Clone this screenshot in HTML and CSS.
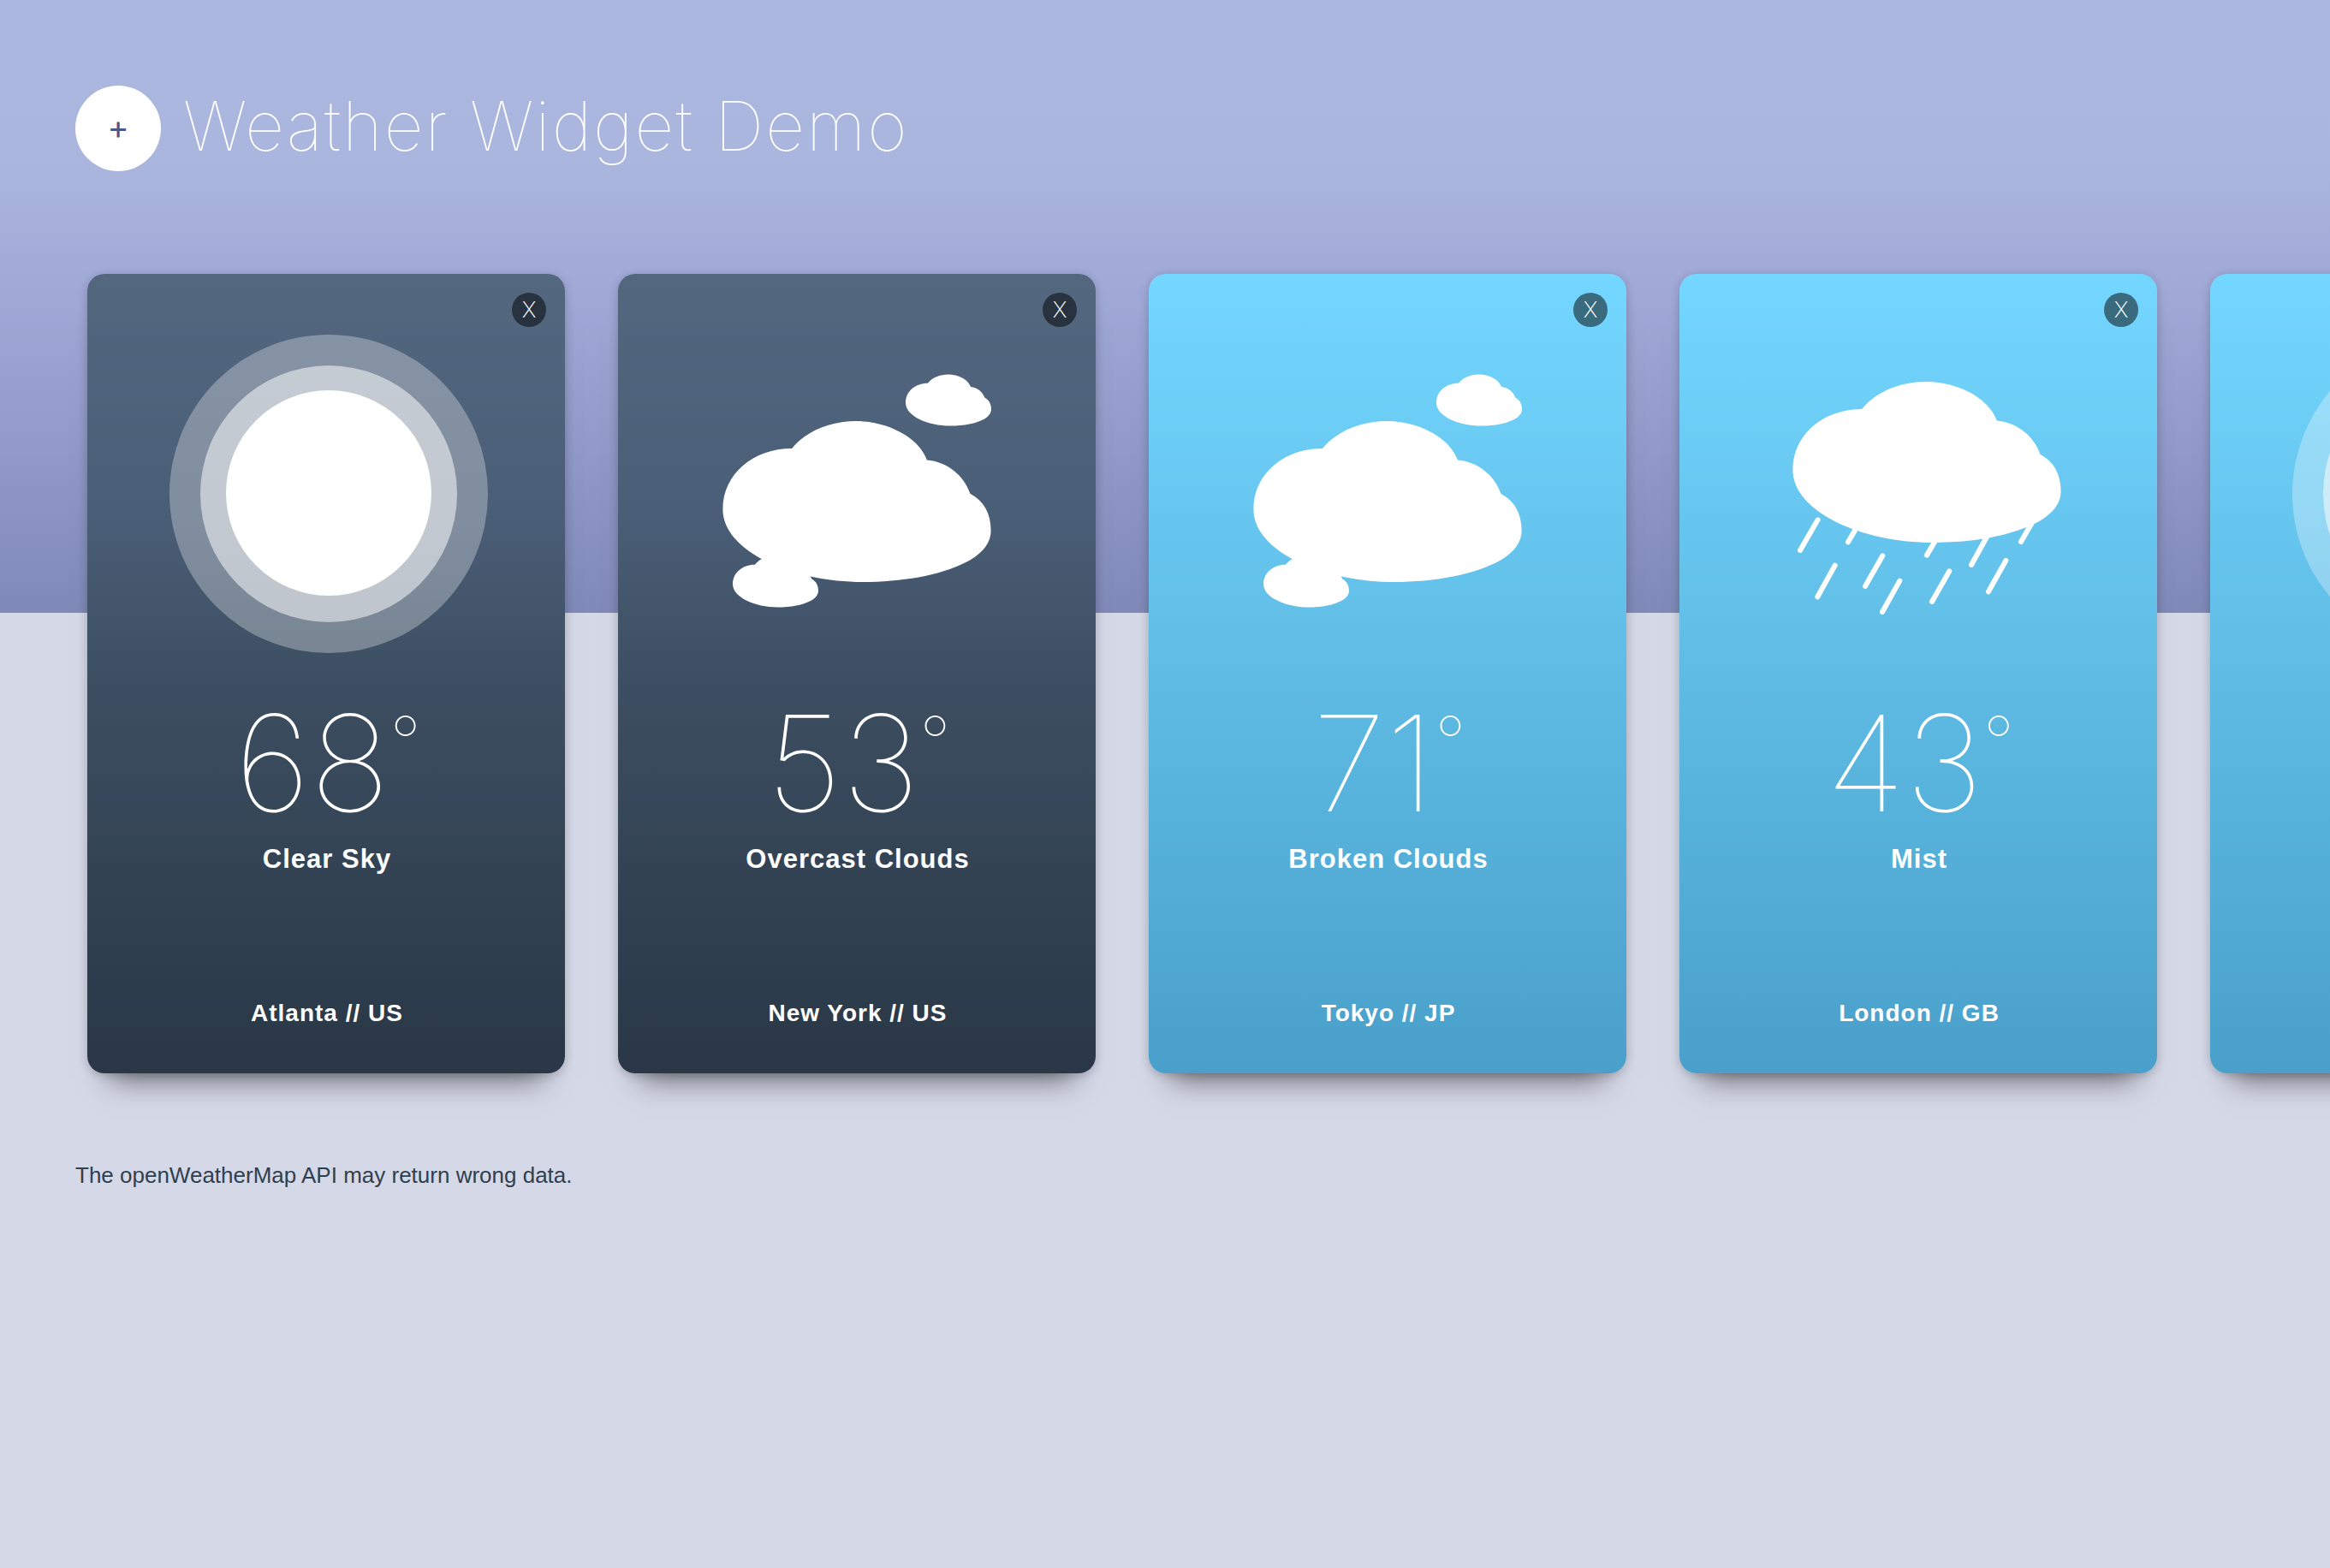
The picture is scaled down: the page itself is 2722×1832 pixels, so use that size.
FILE: index.html
```html
<!DOCTYPE html>
<html lang="en">
<head>
<meta charset="utf-8">
<meta name="viewport" content="width=device-width, initial-scale=1">
<title>Weather Widget Demo</title>
<link rel="stylesheet" href="styles.css">
</head>
<body>
<svg class="symbols" aria-hidden="true">
  <symbol id="puff" viewBox="132 275 943 566">
    <path d="M375 371C425 310 510 275 600 275C710 275 820 330 850 412C920 418 980 465 1002 530C1050 555 1075 600 1075 660C1075 700 1050 735 1000 765C910 815 770 841 625 841C380 841 132 735 132 585C132 460 240 371 375 371Z"/>
  </symbol>
  <symbol id="sun" viewBox="0 0 558 480">
    <circle cx="282" cy="257" r="186" opacity=".3"/>
    <circle cx="282" cy="257" r="150" opacity=".52"/>
    <circle cx="282" cy="256" r="120"/>
  </symbol>
  <symbol id="clouds" viewBox="0 0 558 480">
    <use href="#puff" x="122" y="172" width="314" height="188"/>
    <use href="#puff" x="336" y="117" width="100" height="61"/>
    <use href="#puff" x="134" y="329" width="100" height="61"/>
  </symbol>
  <symbol id="rain" viewBox="0 0 558 480">
    <use href="#puff" x="132" y="126" width="314" height="188"/>
    <g transform="translate(98 90) scale(.3333)" stroke="#fff" stroke-width="18" stroke-linecap="round">
      <path d="M191 592L129 699M330 614L297 670M251 752L190 862M418 718L357 825M478 806L417 915M612 650L573 716M652 772L591 879M790 640L729 750M940 605L903 669M850 735L789 844"/>
    </g>
  </symbol>
</svg>
<header class="header">
  <button class="add" type="button" aria-label="Add city">+</button>
  <h1 class="title">Weather Widget Demo</h1>
</header>
<main>
  <ul class="cards">
    <li class="card night">
      <button class="close" type="button">X</button>
      <svg class="icon"><use href="#sun"/></svg>
      <p class="temp">68<sup class="degree">°</sup></p>
      <p class="sky">Clear Sky</p>
      <h2 class="place">Atlanta // US</h2>
    </li>
    <li class="card night">
      <button class="close" type="button">X</button>
      <svg class="icon"><use href="#clouds"/></svg>
      <p class="temp">53<sup class="degree">°</sup></p>
      <p class="sky">Overcast Clouds</p>
      <h2 class="place">New York // US</h2>
    </li>
    <li class="card day">
      <button class="close" type="button">X</button>
      <svg class="icon"><use href="#clouds"/></svg>
      <p class="temp">71<sup class="degree">°</sup></p>
      <p class="sky">Broken Clouds</p>
      <h2 class="place">Tokyo // JP</h2>
    </li>
    <li class="card day">
      <button class="close" type="button">X</button>
      <svg class="icon"><use href="#rain"/></svg>
      <p class="temp">43<sup class="degree">°</sup></p>
      <p class="sky">Mist</p>
      <h2 class="place">London // GB</h2>
    </li>
    <li class="card day">
      <svg class="icon"><use href="#sun"/></svg>
    </li>
  </ul>
  <p class="note">The openWeatherMap API may return wrong data.</p>
</main>
</body>
</html>
```
FILE: styles.css
```css
* {
  box-sizing: border-box;
  margin: 0;
  padding: 0;
}

body {
  min-height: 100vh;
  overflow-x: clip;
  background: #d5d8e7 linear-gradient(#abb7df 0, #aab6dd 190px, #a2aad8 320px, #808ab8 716px) 0 0 / 100% 716px no-repeat;
  color: #2f4050;
  font-family: "Helvetica Neue", "Liberation Sans", Arial, sans-serif;
}

button {
  border: 0;
  border-radius: 50%;
  cursor: pointer;
}

.symbols {
  position: absolute;
  width: 0;
  height: 0;
}

.header {
  display: flex;
  align-items: center;
  gap: 26px;
  padding: 100px 88px 120px;
}

.add {
  flex: none;
  width: 100px;
  height: 100px;
  padding-bottom: 4px;
  background: #fff;
  color: #4b5789;
  font: 400 38px/40px Inter, sans-serif;
}

.title {
  padding-bottom: 6px;
  color: #fff;
  font: 110 80px/94px Inter, sans-serif;
  letter-spacing: 2px;
}

.cards {
  display: flex;
  gap: 62px;
  padding-left: 102px;
  list-style: none;
}

.card {
  position: relative;
  flex: none;
  width: 558px;
  padding-bottom: 50px;
  border-radius: 20px;
  box-shadow: 0 34px 32px -26px rgba(0, 0, 0, .5), 0 2px 12px rgba(0, 0, 0, .2);
  color: #fff;
  text-align: center;
}

.night {
  background: linear-gradient(#53677f, #4a5e77 30%, #3d4f62 50%, #293746);
}

.day {
  background: linear-gradient(#74d7ff, #49a0ca);
}

.close {
  position: absolute;
  top: 22px;
  right: 22px;
  width: 40px;
  height: 40px;
  background: rgba(0, 0, 0, .5);
  color: #fff;
  font: 200 26px/40px Inter, sans-serif;
}

.icon {
  display: block;
  width: 100%;
  height: 480px;
  fill: #fff;
}

.temp {
  padding-left: 4px;
  font: 120 156px/184px Inter, sans-serif;
}

.degree {
  font-size: 80px;
  line-height: 0;
}

.sky {
  padding-left: 2px;
  font-size: 31px;
  font-weight: 700;
  line-height: 40px;
  letter-spacing: 1px;
}

.place {
  margin-top: 140px;
  padding-left: 2px;
  font-size: 28px;
  font-weight: 700;
  line-height: 40px;
  letter-spacing: 1px;
}

.note {
  margin-top: 103px;
  padding-left: 88px;
  font-size: 26px;
  line-height: 32px;
}
```
